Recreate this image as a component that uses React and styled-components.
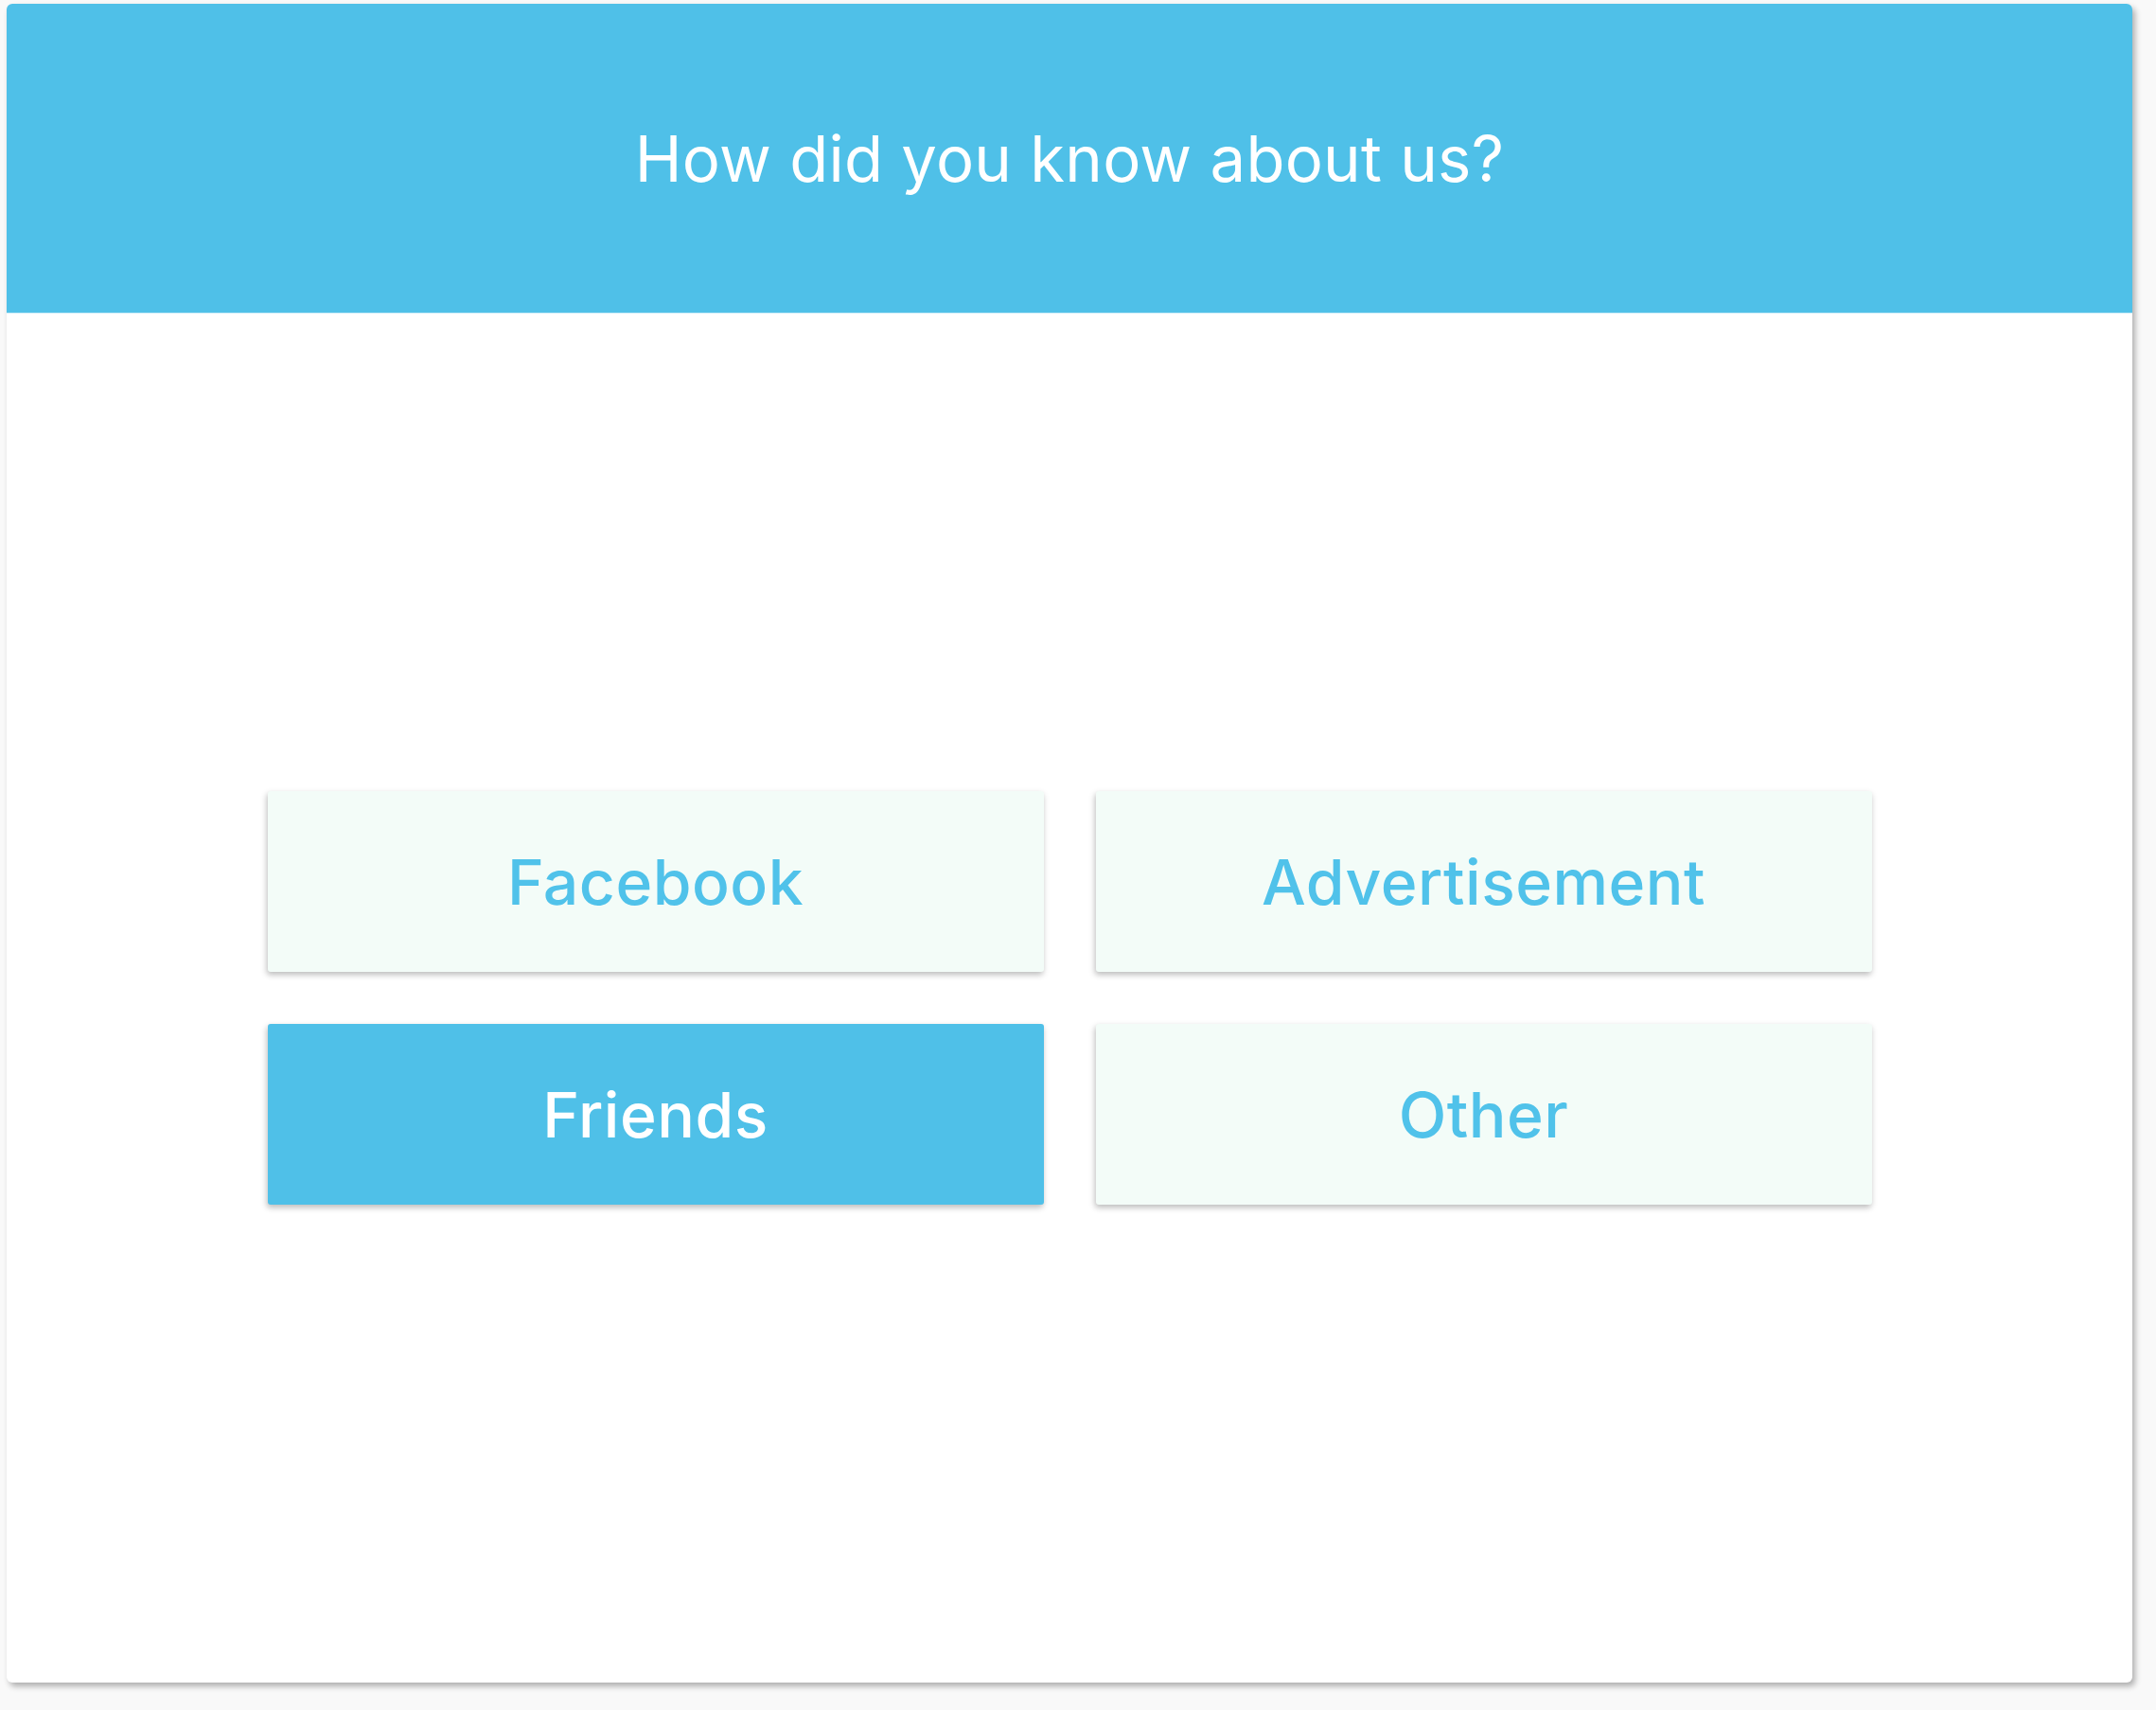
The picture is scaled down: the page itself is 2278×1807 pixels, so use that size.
import styled, { createGlobalStyle } from "styled-components";

const GlobalStyle = createGlobalStyle`
  html, body {
    margin: 0;
    padding: 0;
    background-color: #f9f9f9;
  }
  * {
    box-sizing: border-box;
  }
`;

const Page = styled.div`
  width: 2278px;
  height: 1807px;
  padding: 4px 0 0 7px;
`;

const Card = styled.div`
  width: 2246px;
  height: 1774px;
  background-color: #ffffff;
  border-radius: 6px;
  overflow: hidden;
  display: flex;
  flex-direction: column;
  box-shadow: 3px 4px 6px rgba(0, 0, 0, 0.3);
`;

const Header = styled.div`
  height: 327px;
  flex-shrink: 0;
  background-color: #4fc0e8;
  border-bottom: 1px solid #8fd6f0;
  display: flex;
  align-items: center;
  justify-content: center;
`;

const Title = styled.h1`
  margin: 0;
  font-family: Inter, "Noto Sans", sans-serif;
  font-weight: 400;
  font-size: 67px;
  letter-spacing: 0.25px;
  color: #ffffff;
`;

const Body = styled.div`
  flex: 1;
  display: flex;
  align-items: center;
  justify-content: center;
`;

const Options = styled.div`
  display: grid;
  grid-template-columns: repeat(2, 820px);
  grid-auto-rows: 191px;
  gap: 55px;
`;

const Option = styled.button`
  border: none;
  border-radius: 3px;
  cursor: pointer;
  background-color: ${p => (p.$active ? "#4fc0e8" : "#f3fcf8")};
  color: ${p => (p.$active ? "#ffffff" : "#50c2ea")};
  box-shadow: -1px 3px 6px rgba(0, 0, 0, 0.27);
  font-family: Inter, "Noto Sans", sans-serif;
  font-weight: 500;
  font-size: 66px;
  letter-spacing: 0.5px;
  display: flex;
  align-items: center;
  justify-content: center;
`;

const options = [
  { id: 1, label: "Facebook" },
  { id: 2, label: "Advertisement" },
  { id: 3, label: "Friends", active: true },
  { id: 4, label: "Other" },
];

const App = () => {
  return (
    <>
      <GlobalStyle />
      <Page>
        <Card>
          <Header>
            <Title>How did you know about us?</Title>
          </Header>
          <Body>
            <Options>
              {options.map(opt => (
                <Option key={opt.id} $active={opt.active}>
                  {opt.label}
                </Option>
              ))}
            </Options>
          </Body>
        </Card>
      </Page>
    </>
  );
};

export default App;
